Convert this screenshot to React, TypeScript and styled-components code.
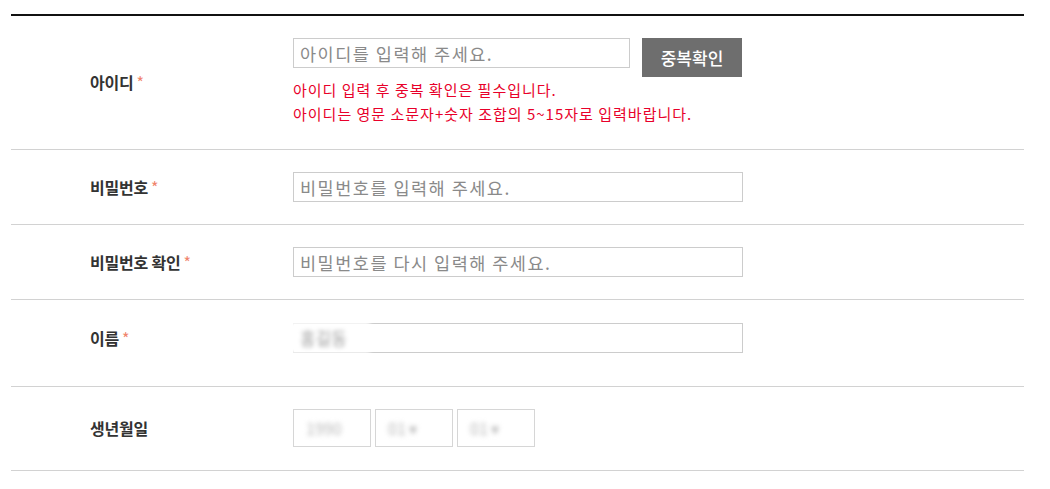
import { createGlobalStyle } from "styled-components"
import styled from "styled-components"

const GlobalStyle = createGlobalStyle`
  body {
    margin: 0;
    background: #fff;
    font-family: "Noto Sans CJK KR", "Noto Sans", sans-serif;
  }
  * { box-sizing: border-box; }
`

type FieldRow = {
  label: string
  required: boolean
  placeholder: string
}

const passwordRows: FieldRow[] = [
  { label: "비밀번호", required: true, placeholder: "비밀번호를 입력해 주세요." },
  { label: "비밀번호 확인", required: true, placeholder: "비밀번호를 다시 입력해 주세요." },
]

const App = () => {
  return (
    <>
      <GlobalStyle />
      <Page>
        <FormTable>
          <Row pt={22} pb={23}>
            <Label>
              아이디<Star>*</Star>
            </Label>
            <Cell>
              <InlineGroup>
                <TextInput w={337} placeholder="아이디를 입력해 주세요." />
                <CheckButton type="button">중복확인</CheckButton>
              </InlineGroup>
              <Notice>
                <p>아이디 입력 후 중복 확인은 필수입니다.</p>
                <p>아이디는 영문 소문자+숫자 조합의 5~15자로 입력바랍니다.</p>
              </Notice>
            </Cell>
          </Row>
          {passwordRows.map(row => (
            <Row key={row.label} pt={22} pb={22}>
              <Label>
                {row.label}
                {row.required && <Star>*</Star>}
              </Label>
              <Cell>
                <TextInput w={450} type="password" placeholder={row.placeholder} />
              </Cell>
            </Row>
          ))}
          <Row pt={23} pb={33}>
            <Label>
              이름<Star>*</Star>
            </Label>
            <Cell>
              <MaskedField>
                <TextInput w={450} />
                <Mosaic>홍길동</Mosaic>
              </MaskedField>
            </Cell>
          </Row>
          <Row pt={22} pb={23}>
            <Label>생년월일</Label>
            <Cell>
              <SelectGroup>
                <DateBox>
                  <Blurred>1990</Blurred>
                </DateBox>
                <DateBox>
                  <Blurred>01 ▾</Blurred>
                </DateBox>
                <DateBox>
                  <Blurred>01 ▾</Blurred>
                </DateBox>
              </SelectGroup>
            </Cell>
          </Row>
        </FormTable>
      </Page>
    </>
  )
}

export default App

const Page = styled("div")({
  padding: "14px 26px 0 11px",
})

const FormTable = styled("div")({
  borderTop: "2px solid #111",
})

const Row = styled("div")<{ pt: number; pb: number }>`
  display: grid;
  grid-template-columns: 282px 1fr;
  align-items: center;
  padding-top: ${p => p.pt}px;
  padding-bottom: ${p => p.pb}px;
  border-bottom: 1px solid #d2d2d2;
`

const Label = styled("div")({
  paddingLeft: 79,
  fontSize: 16,
  fontWeight: 700,
  color: "#333",
  letterSpacing: -0.2,
})

const Star = styled("span")({
  marginLeft: 3,
  color: "#f0846c",
  fontWeight: 400,
})

const Cell = styled("div")({
  display: "flex",
  flexDirection: "column",
})

const InlineGroup = styled("div")({
  display: "flex",
  alignItems: "flex-start",
  gap: 12,
})

const TextInput = styled("input")<{ w: number }>`
  width: ${p => p.w}px;
  height: 30px;
  border: 1px solid #ccc;
  padding: 0 6px;
  font-family: inherit;
  font-size: 17.5px;
  letter-spacing: 1.5px;
  color: #333;
  outline: none;
  &::placeholder {
    color: #8a8a8a;
  }
`

const CheckButton = styled("button")({
  width: 100,
  height: 39,
  border: 0,
  background: "#6e6e6e",
  color: "#fff",
  fontFamily: "inherit",
  fontSize: 17,
  fontWeight: 500,
  cursor: "pointer",
})

const Notice = styled("div")({
  marginTop: 1,
  color: "#e8002a",
  fontSize: 15,
  letterSpacing: 1,
  lineHeight: "24px",
  "& p": {
    margin: 0,
  },
})

const MaskedField = styled("div")({
  position: "relative",
})

const Mosaic = styled("span")({
  position: "absolute",
  left: -5,
  top: -1,
  width: 82,
  height: 31,
  background: "#fff",
  paddingLeft: 12,
  lineHeight: "31px",
  fontSize: 17,
  color: "#9a9a9a",
  filter: "blur(2px)",
})

const SelectGroup = styled("div")({
  display: "flex",
  gap: 4,
})

const DateBox = styled("div")({
  width: 78,
  height: 38,
  border: "1px solid #d6d6d6",
  display: "flex",
  alignItems: "center",
  paddingLeft: 12,
})

const Blurred = styled("span")({
  fontSize: 16,
  color: "#b8b8b8",
  filter: "blur(2.5px)",
})
